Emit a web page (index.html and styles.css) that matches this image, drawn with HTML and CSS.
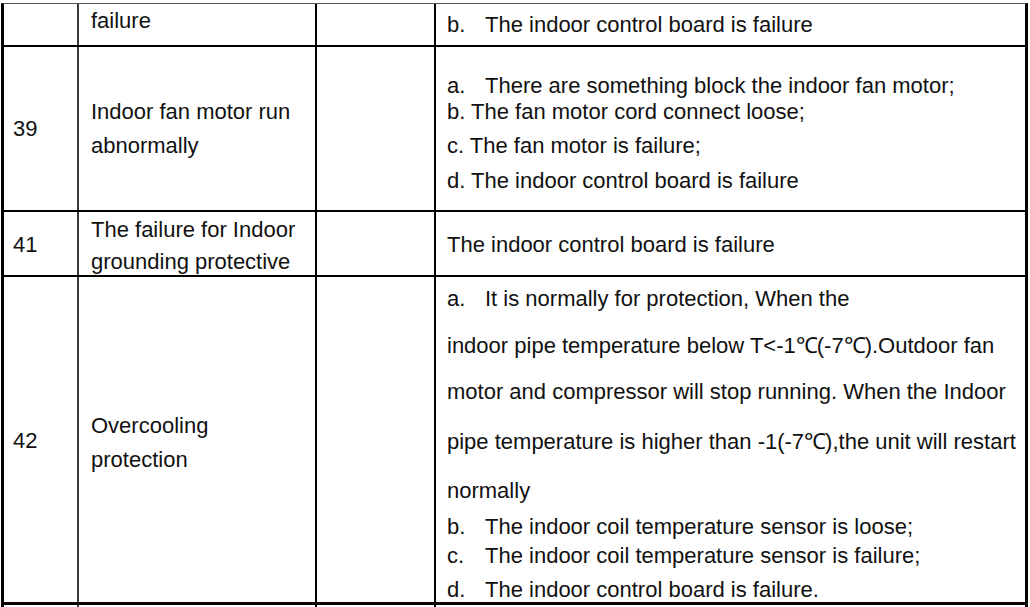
FILE: index.html
```html
<!DOCTYPE html>
<html>
<head>
<meta charset="utf-8">
<link rel="stylesheet" href="styles.css">
</head>
<body>
<div class="sheet">
  <div class="row r1">
    <div class="cell c1"></div>
    <div class="cell c2 p-r1c2"><div class="line">failure</div></div>
    <div class="cell c3"></div>
    <div class="cell c4 p-r1c4"><div class="line"><span class="mk">b.</span>The indoor control board is failure</div></div>
  </div>
  <div class="row r2">
    <div class="cell c1 p-r2c1"><div class="line">39</div></div>
    <div class="cell c2 p-r2c2">
      <div class="line">Indoor fan motor run</div>
      <div class="line m10">abnormally</div>
    </div>
    <div class="cell c3"></div>
    <div class="cell c4 p-r2c4">
      <div class="line"><span class="mk">a.</span>There are something block the indoor fan motor;</div>
      <div class="line m2">b. The fan motor cord connect loose;</div>
      <div class="line m10">c. The fan motor is failure;</div>
      <div class="line m11">d. The indoor control board is failure</div>
    </div>
  </div>
  <div class="row r3">
    <div class="cell c1 p-r3c1"><div class="line">41</div></div>
    <div class="cell c2 p-r3c2">
      <div class="line">The failure for Indoor</div>
      <div class="line m8">grounding protective</div>
    </div>
    <div class="cell c3"></div>
    <div class="cell c4 p-r3c4"><div class="line">The indoor control board is failure</div></div>
  </div>
  <div class="row r4">
    <div class="cell c1 p-r4c1"><div class="line">42</div></div>
    <div class="cell c2 p-r4c2">
      <div class="line">Overcooling</div>
      <div class="line m10">protection</div>
    </div>
    <div class="cell c3"></div>
    <div class="cell c4 p-r4c4">
      <div class="line"><span class="mk">a.</span>It is normally for protection, When the</div>
      <div class="line m23">indoor pipe temperature below T&lt;-1<span class="deg">℃</span>(-7<span class="deg">℃</span>).Outdoor fan</div>
      <div class="line m22">motor and compressor will stop running. When the Indoor</div>
      <div class="line m26">pipe temperature is higher than -1(-7<span class="deg">℃</span>),the unit will restart</div>
      <div class="line m25">normally</div>
      <div class="line m12"><span class="mk">b.</span>The indoor coil temperature sensor is loose;</div>
      <div class="line m5"><span class="mk">c.</span>The indoor coil temperature sensor is failure;</div>
      <div class="line m10"><span class="mk">d.</span>The indoor control board is failure.</div>
    </div>
  </div>
  <div class="row stub">
    <div class="cell c1"></div>
    <div class="cell c2"></div>
    <div class="cell c3"></div>
    <div class="cell c4"></div>
  </div>
</div>
</body>
</html>
```

FILE: styles.css
```css
html, body {
  margin: 0;
  padding: 0;
  background: #ffffff;
}
body {
  font-family: "Liberation Sans", Arial, sans-serif;
  font-size: 22px;
  color: #111111;
  overflow: hidden;
  height: 607px;
}
.sheet {
  margin: 3px 2px 0 1px;
  width: 1021px;
  border-left: 3px solid #000;
  border-right: 3px solid #000;
  border-top: 1px solid #555;
}
.row {
  display: grid;
  grid-template-columns: 75px 238px 119px 589px;
  border-bottom: 2px solid #000;
  box-sizing: border-box;
}
.r1 { height: 43px; }
.r2 { height: 165px; }
.r3 { height: 65px; }
.r4 { height: 328px; border-bottom-width: 3px; }
.stub { height: 4px; border-bottom: none; }
.cell {
  box-sizing: border-box;
}
.c1 { border-right: 2px solid #3a3a3a; padding-left: 9px; }
.c2 { border-right: 2px solid #000; padding-left: 12px; }
.c3 { border-right: 2px solid #000; }
.c4 { padding-left: 11px; }
.line {
  line-height: 24px;
  white-space: nowrap;
}
.mk {
  display: inline-block;
  width: 38px;
}
.deg {
  letter-spacing: -1px;
}
.m2 { margin-top: 2px; }
.m5 { margin-top: 5px; }
.m8 { margin-top: 8px; }
.m10 { margin-top: 10px; }
.m11 { margin-top: 11px; }
.m12 { margin-top: 12px; }
.m22 { margin-top: 22px; }
.m23 { margin-top: 23px; }
.m25 { margin-top: 25px; }
.m26 { margin-top: 26px; }

.p-r1c2 { padding-top: 5px; }
.p-r1c4 { padding-top: 9px; }
.p-r2c1 { padding-top: 70px; }
.p-r2c2 { padding-top: 53px; }
.p-r2c4 { padding-top: 27px; }
.p-r3c1 { padding-top: 21px; }
.p-r3c2 { padding-top: 6px; }
.p-r3c4 { padding-top: 21px; }
.p-r4c1 { padding-top: 152px; }
.p-r4c2 { padding-top: 137px; }
.p-r4c4 { padding-top: 10px; }
```
